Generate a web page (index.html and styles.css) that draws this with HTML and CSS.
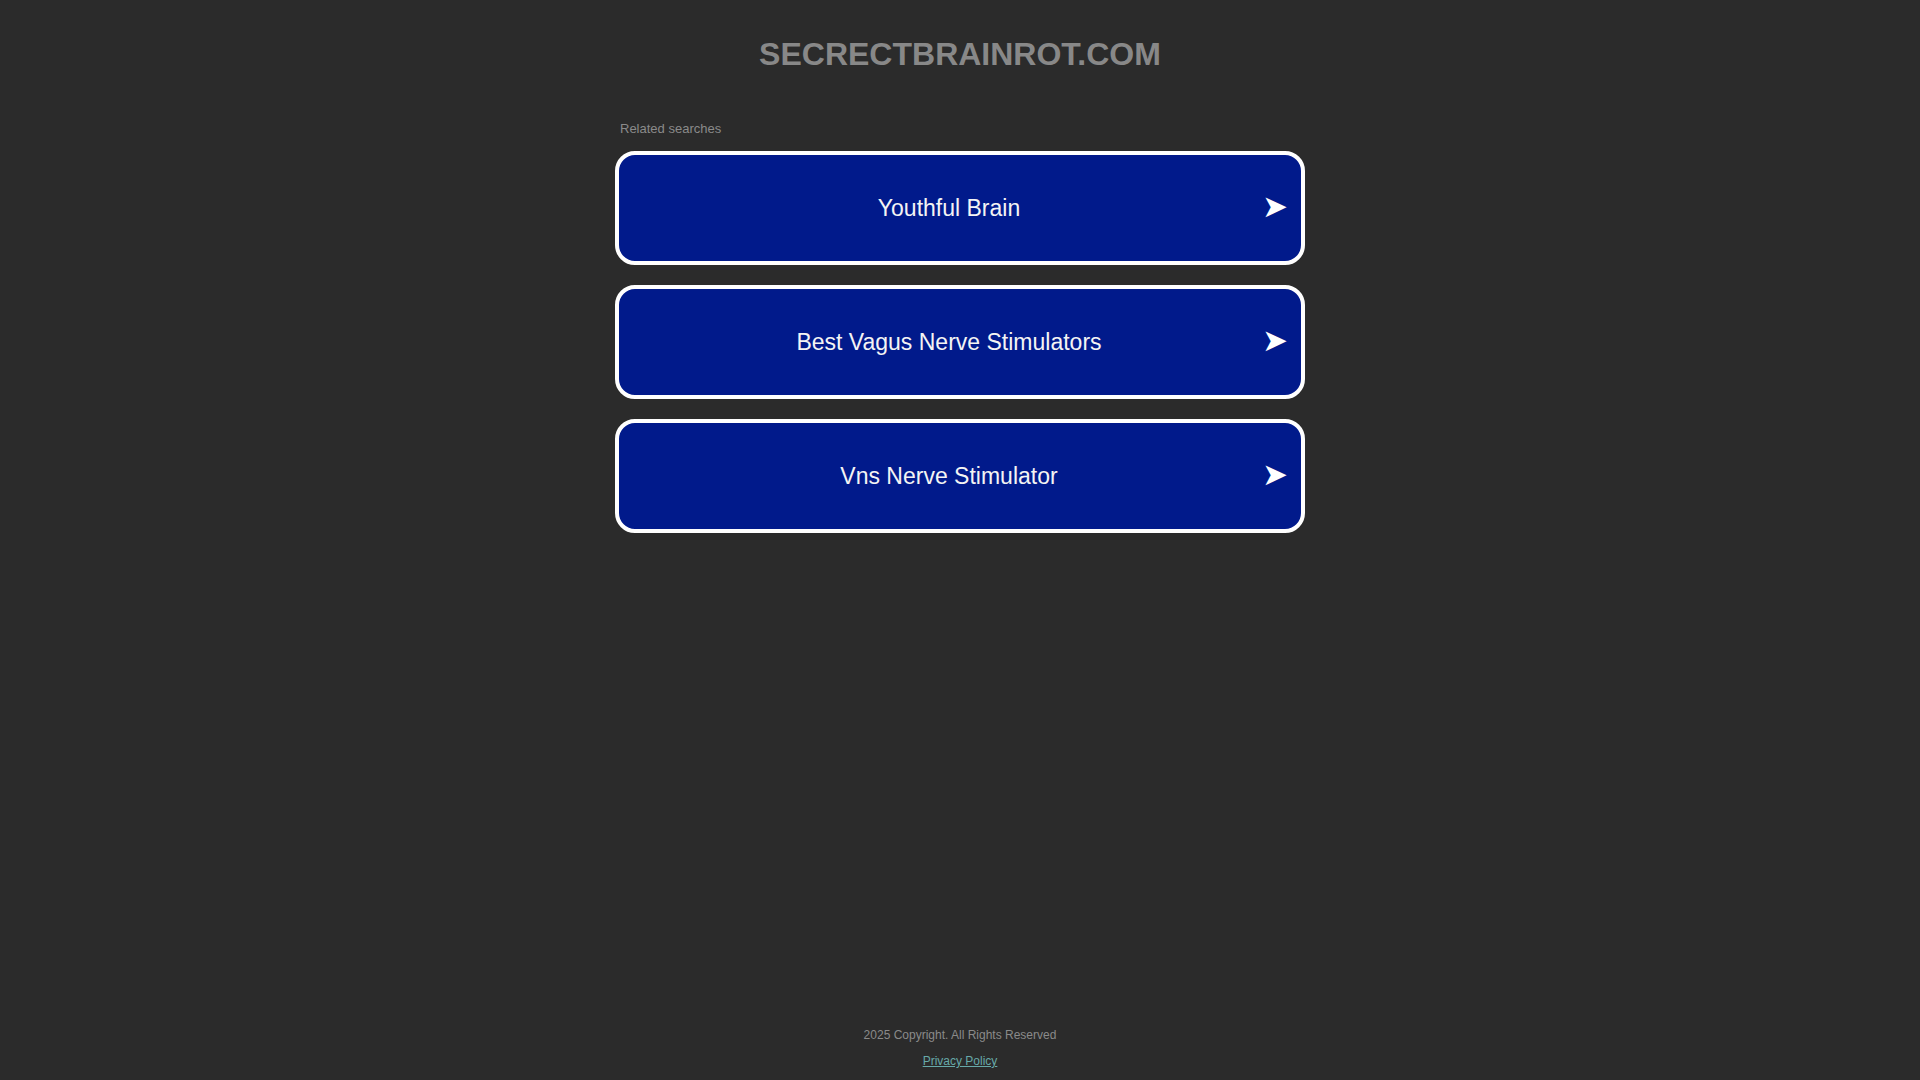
FILE: index.html
```html
<!DOCTYPE html>
<html lang="en">
<head>
<meta charset="utf-8">
<title>secrectbrainrot.com</title>
<link rel="stylesheet" href="styles.css">
</head>
<body>
<header class="header">
  <h1 class="domain">SECRECTBRAINROT.COM</h1>
</header>
<main class="related">
  <p class="related-title">Related searches</p>
  <ul class="list">
    <li><a class="item" href="#"><span class="item-text">Youthful Brain</span><span class="item-arrow">➤</span></a></li>
    <li><a class="item" href="#"><span class="item-text">Best Vagus Nerve Stimulators</span><span class="item-arrow">➤</span></a></li>
    <li><a class="item" href="#"><span class="item-text">Vns Nerve Stimulator</span><span class="item-arrow">➤</span></a></li>
  </ul>
</main>
<footer class="footer">
  <p class="copyright">2025 Copyright. All Rights Reserved</p>
  <a class="privacy" href="#">Privacy Policy</a>
</footer>
</body>
</html>
```

FILE: styles.css
```css
html, body {
  margin: 0;
  padding: 0;
}
body {
  background: #2b2b2b;
  font-family: "Liberation Sans", Arial, sans-serif;
  min-height: 100vh;
  display: flex;
  flex-direction: column;
  align-items: center;
}
.header {
  padding-top: 36px;
  text-align: center;
}
.domain {
  margin: 0;
  font-size: 32px;
  line-height: 37px;
  font-weight: bold;
  color: #888888;
}
.related {
  width: 690px;
  margin-top: 48px;
}
.related-title {
  margin: 0 0 15px 0;
  padding-left: 5px;
  font-size: 13px;
  line-height: 15px;
  color: #8a8a8a;
}
.list {
  list-style: none;
  margin: 0;
  padding: 0;
  display: flex;
  flex-direction: column;
  gap: 20px;
}
.item {
  display: flex;
  align-items: center;
  height: 106px;
  padding: 0 17px;
  background: #011a8b;
  border: 4px solid #ffffff;
  border-radius: 20px;
  color: #f4f4f4;
  text-decoration: none;
}
.item-text {
  flex: 1;
  text-align: center;
  font-size: 23px;
}
.item-arrow {
  width: 22px;
  padding-bottom: 4px;
  font-family: "DejaVu Sans", sans-serif;
  font-size: 31px;
  line-height: 31px;
  color: #ffffff;
  text-align: center;
}
.footer {
  margin-top: auto;
  padding-bottom: 12px;
  display: flex;
  flex-direction: column;
  align-items: center;
  gap: 12px;
}
.copyright {
  margin: 0;
  font-size: 12px;
  line-height: 14px;
  color: #8a8a8a;
}
.privacy {
  font-size: 12px;
  line-height: 14px;
  color: #67a9a9;
}
```
